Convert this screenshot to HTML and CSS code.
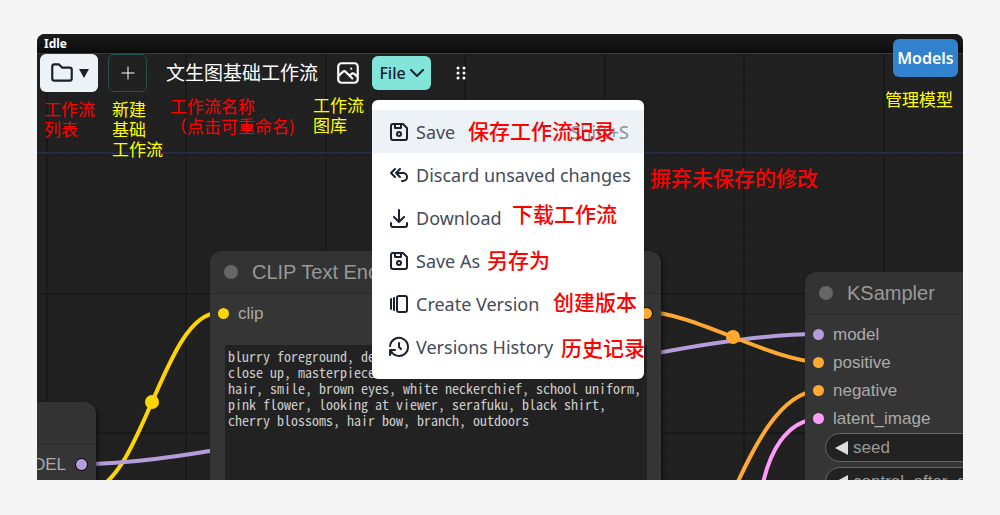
FILE: index.html
```html
<!DOCTYPE html>
<html lang="zh-CN">
<head>
<meta charset="utf-8">
<title>Workspace Manager</title>
<link rel="stylesheet" href="styles.css">
</head>
<body>
<svg class="defs" aria-hidden="true">
  <symbol id="floppy" viewBox="0 0 24 24"><path d="M6 4h10l4 4v10a2 2 0 0 1-2 2h-12a2 2 0 0 1-2-2v-12a2 2 0 0 1 2-2M14 4v4h-6v-4"/><circle cx="12" cy="14" r="2"/></symbol>
</svg>
<main class="app">
  <div class="graph">
    <svg class="wires" aria-hidden="true">
      <defs>
        <pattern id="grid" x="9" y="-20" width="279" height="279" patternUnits="userSpaceOnUse">
          <path class="minor" d="M14 0V279M28 0V279M42 0V279M56 0V279M70 0V279M84 0V279M98 0V279M112 0V279M126 0V279M153 0V279M167 0V279M181 0V279M195 0V279M209 0V279M223 0V279M237 0V279M251 0V279M265 0V279M0 14H279M0 28H279M0 42H279M0 56H279M0 70H279M0 84H279M0 98H279M0 112H279M0 126H279M0 153H279M0 167H279M0 181H279M0 195H279M0 209H279M0 223H279M0 237H279M0 251H279M0 265H279"/>
          <path class="major" d="M1 0V279M140 0V279M0 1H279M0 140H279"/>
        </pattern>
      </defs>
      <rect width="100%" height="100%" fill="url(#grid)"/>
      <path class="axis" d="M0 119H2000"/>
      <g transform="translate(-37 -34)">
        <path class="wire yellow" d="M86 491C141 491 163 313 218 313"/>
        <circle class="knot-yellow" cx="152" cy="402" r="7"/>
        <path class="wire purple" d="M82 464C269 464 632 334 819 334"/>
        <path class="wire orange" d="M647 312C692 312 774 362 819 362"/>
        <circle class="knot-orange" cx="733" cy="337" r="7"/>
        <path class="wire orange" d="M656 600C723 580 743 396 819 390"/>
        <path class="wire pink" d="M760 500C767 450 787 421 819 418"/>
      </g>
    </svg>
    <section class="node loader">
      <header class="node-title"></header>
      <div class="slot out"><span>MODEL</span><i class="dot purple ring"></i></div>
    </section>
    <section class="node clip">
      <header class="node-title"><i class="bulb"></i>CLIP Text Encode (Prompt)</header>
      <div class="slot"><i class="dot yellow"></i><span>clip</span><i class="dot orange ring end"></i></div>
      <textarea class="prompt" aria-label="Prompt" spellcheck="false">blurry foreground, depth of field,
close up, masterpiece
hair, smile, brown eyes, white neckerchief, school uniform,
pink flower, looking at viewer, serafuku, black shirt,
cherry blossoms, hair bow, branch, outdoors</textarea>
    </section>
    <section class="node sampler">
      <header class="node-title"><i class="bulb"></i>KSampler</header>
      <div class="slot"><i class="dot purple"></i><span>model</span></div>
      <div class="slot"><i class="dot orange"></i><span>positive</span></div>
      <div class="slot"><i class="dot orange"></i><span>negative</span></div>
      <div class="slot"><i class="dot pink"></i><span>latent_image</span></div>
      <div class="field"><i class="left"></i><span>seed</span></div>
      <div class="field"><i class="left"></i><span>control_after_generate</span></div>
    </section>
  </div>

  <div class="status">Idle</div>
  <nav class="toolbar">
    <button class="btn folders" aria-label="Workflows">
      <svg class="ico" viewBox="0 0 24 24"><path d="M5 4h4l3 3h7a2 2 0 0 1 2 2v8a2 2 0 0 1-2 2h-14a2 2 0 0 1-2-2v-11a2 2 0 0 1 2-2"/></svg>
      <svg class="caret" viewBox="0 0 10 9"><path d="M0 0h10l-5 9z"/></svg>
    </button>
    <button class="btn add" aria-label="New workflow"><svg class="plus" viewBox="0 0 14 14"><path d="M7 1v12M1 7h12"/></svg></button>
    <span class="name">文生图基础工作流</span>
    <button class="btn photo" aria-label="Gallery">
      <svg class="ico" viewBox="0 0 24 24"><path d="M15 8h.01M6 3h12a3 3 0 0 1 3 3v12a3 3 0 0 1-3 3h-12a3 3 0 0 1-3-3v-12a3 3 0 0 1 3-3M3 15l4-4c.93-.9 2.07-.9 3 0l6 6M14 14l1-1c.93-.9 2.07-.9 3 0l3 3"/></svg>
    </button>
    <button class="btn file">File<svg class="chev" viewBox="0 0 14 9"><path d="M1 1l6 6l6-6"/></svg></button>
    <svg class="grip" viewBox="0 0 10 14" aria-hidden="true"><circle cx="2" cy="2" r="1.5"/><circle cx="8" cy="2" r="1.5"/><circle cx="2" cy="7" r="1.5"/><circle cx="8" cy="7" r="1.5"/><circle cx="2" cy="12" r="1.5"/><circle cx="8" cy="12" r="1.5"/></svg>
  </nav>
  <button class="btn models">Models</button>

  <div class="menu" role="menu">
    <button class="item active" role="menuitem"><svg class="mi"><use href="#floppy"/></svg>Save<span class="key">Shift+S</span></button>
    <button class="item" role="menuitem"><svg class="mi" viewBox="0 0 24 24"><path d="M13 14l-4-4l4-4M8 14l-4-4l4-4M9 10h7a4 4 0 1 1 0 8h-1"/></svg>Discard unsaved changes</button>
    <button class="item" role="menuitem"><svg class="mi" viewBox="0 0 24 24"><path d="M4 17v2a2 2 0 0 0 2 2h12a2 2 0 0 0 2-2v-2M7 11l5 5l5-5M12 4v12"/></svg>Download</button>
    <button class="item" role="menuitem"><svg class="mi"><use href="#floppy"/></svg>Save As</button>
    <button class="item" role="menuitem"><svg class="mi" viewBox="0 0 24 24"><path d="M12 4h6a2 2 0 0 1 2 2v12a2 2 0 0 1-2 2h-6a2 2 0 0 1-2-2v-12a2 2 0 0 1 2-2M7 6v12M4 7v10"/></svg>Create Version</button>
    <button class="item" role="menuitem"><svg class="mi" viewBox="0 0 24 24"><path d="M12 8v4l2 2M3.05 11a9 9 0 1 1 .5 4m-.5 5v-5h5"/></svg>Versions History</button>
  </div>

  <p class="note red n-list">工作流<br>列表</p>
  <p class="note n-new">新建<br>基础<br>工作流</p>
  <p class="note red n-name">工作流名称<br>（点击可重命名)</p>
  <p class="note n-gallery">工作流<br>图库</p>
  <p class="note n-models">管理模型</p>
  <p class="note red big n-save">保存工作流记录</p>
  <p class="note red big n-discard">摒弃未保存的修改</p>
  <p class="note red big n-download">下载工作流</p>
  <p class="note red big n-saveas">另存为</p>
  <p class="note red big n-create">创建版本</p>
  <p class="note red big n-history">历史记录</p>
</main>
</body>
</html>
```
FILE: styles.css
```css
* { box-sizing: border-box; }
body {
  margin: 0;
  padding: 34px 37px 35px;
  background: #f5f5f5;
  font-family: "Noto Sans", "Noto Sans CJK SC", sans-serif;
}
.defs { position: absolute; width: 0; height: 0; }
svg { fill: none; stroke-linecap: round; stroke-linejoin: round; flex: none; }
.app {
  position: relative;
  height: calc(100vh - 69px);
  overflow: hidden;
  border-radius: 8px 8px 0 0;
  background: #212121;
}
.graph { position: absolute; inset: 0; font-family: "Liberation Sans", Arial, sans-serif; }
.wires { position: absolute; width: 100%; height: 100%; }
.minor { stroke: #1e1e1e; stroke-width: 1; }
.major { stroke: #191919; stroke-width: 2; }
.axis { stroke: #222b48; stroke-width: 2; }
.wire { stroke-width: 4; }
.wire.yellow { stroke: #ffd500; }
.wire.purple { stroke: #b39ddb; }
.wire.orange { stroke: #ffa931; }
.wire.pink { stroke: #ff9cf9; }
.knot-yellow { fill: #ffd500; }
.knot-orange { fill: #ffa931; }

.node {
  position: absolute;
  background: #353535;
  border-radius: 12px;
  box-shadow: 2px 2px 4px rgba(0, 0, 0, .5);
  color: #aaa;
  font-size: 17px;
}
.loader { left: -200px; top: 368px; width: 259px; height: 200px; }
.clip { left: 173px; top: 217px; width: 451px; height: 300px; }
.sampler { left: 768px; top: 238px; width: 450px; height: 300px; }
.node-title {
  display: flex;
  align-items: center;
  gap: 14px;
  height: 43px;
  padding-left: 14px;
  border-bottom: 1px solid #292929;
  border-radius: 12px 12px 0 0;
  background: #333;
  color: #999;
  font-size: 20px;
  white-space: nowrap;
}
.bulb { width: 14px; height: 14px; border-radius: 50%; background: #666; }
.slot { display: flex; align-items: center; gap: 9px; height: 28px; padding: 0 8px; }
.slot span { padding-top: 2px; }
.clip .slot, .loader .slot { height: 38px; }
.sampler .node-title { margin-bottom: 5px; }
.out { justify-content: flex-end; }
.dot { flex: none; width: 11px; height: 11px; border-radius: 50%; }
.ring { width: 13px; height: 13px; border: 1px solid #000; }
.end { margin-left: auto; }
.dot.yellow { background: #ffd500; }
.dot.orange { background: #ffa931; }
.dot.purple { background: #b39ddb; }
.dot.pink { background: #ff9cf9; }
.prompt {
  display: block;
  width: 422px;
  height: 200px;
  margin: 13px 0 0 15px;
  padding: 3px;
  border: 0;
  resize: none;
  overflow: hidden;
  background: #222;
  color: #ccc;
  font-family: "Noto Sans Mono CJK SC", "Liberation Mono", monospace;
  font-size: 14px;
  line-height: 16px;
  white-space: pre;
}
.field {
  display: flex;
  align-items: center;
  gap: 5px;
  height: 29px;
  margin: 1px 20px 5px;
  padding-left: 9px;
  border: 1px solid #666;
  border-radius: 15px;
  background: #222;
  color: #999;
}
.left { border: 7px solid transparent; border-left: 0; border-right: 13px solid #ddd; }

.status {
  position: relative;
  height: 20px;
  padding-left: 7px;
  border-bottom: 1px solid #3c3c3c;
  background: linear-gradient(#1c1c1c, #0c0c0c);
  color: #fff;
  font-size: 12px;
  font-weight: 700;
  line-height: 20px;
}
.btn {
  display: flex;
  align-items: center;
  justify-content: center;
  padding: 0;
  border: 0;
  border-radius: 6px;
  background: none;
  font-family: inherit;
}
.toolbar { position: relative; display: flex; align-items: center; height: 38px; padding-left: 3px; }
.ico { width: 26px; height: 26px; stroke: currentColor; stroke-width: 2; }
.folders { gap: 4px; width: 58px; height: 38px; background: #edf2f7; color: #1a202c; }
.caret { width: 10px; height: 9px; fill: #1a202c; }
.add { width: 39px; height: 38px; margin-left: 10px; border: 1px solid #24504e; }
.plus { width: 14px; height: 14px; stroke: #fff; stroke-width: 1; }
.name { margin: 0 17px 0 19px; color: #fff; font-size: 19px; line-height: 26px; white-space: nowrap; }
.photo { color: #fff; }
.file {
  gap: 4px;
  width: 59px;
  height: 34px;
  margin-left: 11px;
  background: #81e6d9;
  color: #1a202c;
  font-size: 16px;
  font-weight: 500;
}
.chev { width: 14px; height: 9px; stroke: #1a202c; stroke-width: 2; }
.grip { width: 10px; height: 14px; margin-left: 25px; fill: #fff; }
.models {
  position: absolute;
  top: 5px;
  right: 5px;
  width: 65px;
  height: 38px;
  background: #3182ce;
  color: #fff;
  font-size: 16px;
  font-weight: 600;
}

.menu {
  position: absolute;
  left: 335px;
  top: 66px;
  width: 272px;
  padding: 10px 0 11px;
  border-radius: 6px;
  background: #fff;
}
.item {
  display: flex;
  align-items: center;
  gap: 5px;
  width: 100%;
  height: 43px;
  padding: 0 15px;
  border: 0;
  background: none;
  color: #444b59;
  font-family: inherit;
  font-size: 18px;
  white-space: nowrap;
}
.active { background: #edf2f7; }
.mi { width: 24px; height: 24px; stroke: #1a202c; stroke-width: 2; }
.key { margin-left: auto; color: #8b9098; }

.note {
  position: absolute;
  margin: 0;
  color: #ff0;
  font-family: "Noto Sans CJK SC", sans-serif;
  font-size: 17px;
  line-height: 20px;
  white-space: nowrap;
}
.red { color: #f00; }
.big { font-size: 21px; font-weight: 500; line-height: 26px; }
.n-list { left: 7px; top: 65px; }
.n-new { left: 75px; top: 65px; }
.n-name { left: 133px; top: 62px; }
.n-gallery { left: 276px; top: 61px; }
.n-models { right: 10px; top: 55px; }
.n-save { left: 431px; top: 83px; }
.n-discard { left: 613px; top: 130px; }
.n-download { left: 475px; top: 166px; }
.n-saveas { left: 450px; top: 212px; }
.n-create { left: 516px; top: 254px; }
.n-history { left: 524px; top: 300px; }
```
